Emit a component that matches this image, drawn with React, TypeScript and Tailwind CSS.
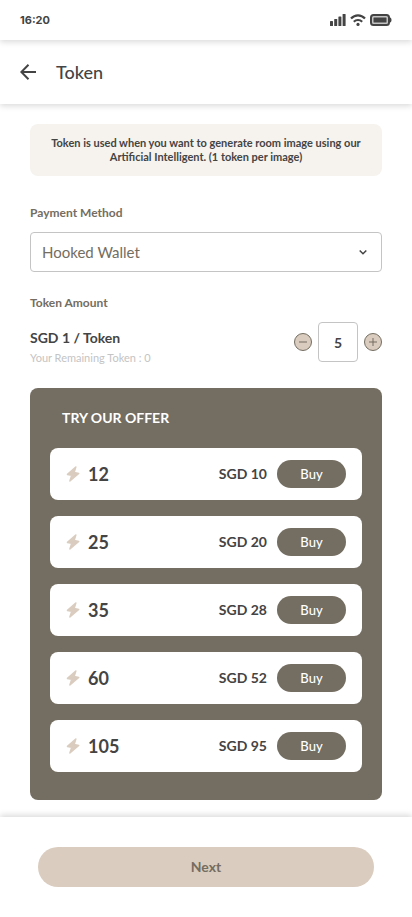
import { useState } from 'react';

interface Offer {
  tokens: number;
  price: number;
}

const offers: Offer[] = [
  { tokens: 12, price: 10 },
  { tokens: 25, price: 20 },
  { tokens: 35, price: 28 },
  { tokens: 60, price: 52 },
  { tokens: 105, price: 95 },
];

const StatusBar = () => (
  <div className="relative z-20 flex h-10 items-center justify-between bg-white px-5 shadow-[0_2px_6px_rgba(0,0,0,0.15)]">
    <span className="font-[Inter,sans-serif] text-[11px] font-bold">16:20</span>
    <div className="flex items-center gap-1">
      <svg width="17" height="12" viewBox="0 0 17 12" fill="currentColor" aria-hidden="true">
        <rect x="1" y="7" width="3" height="5" rx="0.6" />
        <rect x="5.2" y="5" width="3" height="7" rx="0.6" />
        <rect x="9.4" y="2.5" width="3" height="9.5" rx="0.6" />
        <rect x="13.6" y="0" width="3" height="12" rx="0.6" />
      </svg>
      <svg width="16" height="12" viewBox="0 0 16 12" fill="none" stroke="currentColor" strokeWidth="2.2" aria-hidden="true">
        <path d="M1 4.600C5 .3 11 .3 15 4.600" />
        <path d="M3.800 7.800c2.400-2.400 6-2.400 8.400 0" />
        <circle cx="8" cy="10.400" r="1.600" fill="currentColor" stroke="none" />
      </svg>
      <svg width="22" height="12" viewBox="0 0 22 12" aria-hidden="true">
        <rect x="1" y="1" width="18" height="10" rx="2.5" fill="#c4c4c4" stroke="currentColor" strokeWidth="2" />
        <rect x="3.5" y="3.5" width="13" height="5" rx="0.5" fill="currentColor" />
        <path d="M20 3.500c2 .3 2 4.700 0 5z" fill="currentColor" />
      </svg>
    </div>
  </div>
);

const Header = () => (
  <header className="relative z-10 flex h-16 items-center gap-5 bg-white px-5 shadow-[0_2px_6px_rgba(0,0,0,0.15)]">
    <button type="button" aria-label="Back">
      <svg width="16" height="16" viewBox="0 0 16 16" fill="none" stroke="currentColor" strokeWidth="2" aria-hidden="true">
        <path d="M16 8H1.500M8.500 .8 1.300 8l7.200 7.200" />
      </svg>
    </button>
    <h1 className="text-lg font-medium">Token</h1>
  </header>
);

interface StepButtonProps {
  label: string;
  icon: string;
  onClick: () => void;
}

const StepButton = ({ label, icon, onClick }: StepButtonProps) => (
  <button
    type="button"
    aria-label={label}
    onClick={onClick}
    className="flex size-[18px] items-center justify-center rounded-full border border-[#746d61] bg-[#daccbf] text-[#746d61]"
  >
    <svg width="8" height="8" viewBox="0 0 8 8" fill="none" stroke="currentColor" aria-hidden="true">
      <path d={icon} />
    </svg>
  </button>
);

const OfferRow = ({ tokens, price }: Offer) => (
  <li className="flex h-[52px] items-center rounded-lg bg-white px-4">
    <svg
      width="14"
      height="16"
      viewBox="0 0 14 16"
      fill="#daccbf"
      stroke="#daccbf"
      strokeWidth="1.5"
      strokeLinejoin="round"
      aria-hidden="true"
    >
      <path d="M9.800 1 1.500 8.400l4.300.9L3.900 15l8.800-7.600-4.500-1z" />
    </svg>
    <span className="ml-2 text-lg font-bold">{tokens}</span>
    <span className="ml-auto text-sm font-bold">SGD {price}</span>
    <button type="button" className="ml-[10px] h-7 w-[69px] rounded-full bg-[#746d61] pt-0.5 text-[13px] font-medium text-white">
      Buy
    </button>
  </li>
);

const App = () => {
  const [amount, setAmount] = useState(5);

  return (
    <div className="flex min-h-screen flex-col bg-white font-[Lato,sans-serif] text-[#444444]">
      <StatusBar />
      <Header />

      <main className="flex-1 px-[30px] pt-5 pb-[17px]">
        <p className="rounded-lg bg-[#f6f3ee] px-5 py-3 text-center text-[11px] leading-[14px] font-bold">
          Token is used when you want to generate room image using our Artificial Intelligent. (1 token per image)
        </p>

        <label htmlFor="payment" className="mt-[29px] block text-xs leading-4 font-bold text-[#746d61]">
          Payment Method
        </label>
        <div className="relative mt-[11px]">
          <select
            id="payment"
            className="h-10 w-full appearance-none rounded border border-[#c4c4c4] bg-white px-[11px] text-[15px] text-[#746d61]"
          >
            <option>Hooked Wallet</option>
          </select>
          <svg
            className="pointer-events-none absolute top-4 right-[15px]"
            width="8"
            height="8"
            viewBox="0 0 8 8"
            fill="none"
            stroke="currentColor"
            strokeWidth="1.5"
            aria-hidden="true"
          >
            <path d="m.7 2.500 3.300 3.300 3.300-3.300" />
          </svg>
        </div>

        <label htmlFor="amount" className="mt-[23px] block text-xs leading-4 font-bold text-[#746d61]">
          Token Amount
        </label>
        <div className="mt-[11px] flex items-start justify-between">
          <div className="pt-[6px]">
            <p className="text-sm leading-5 font-bold">SGD 1 / Token</p>
            <p className="text-[11px] leading-5 text-[#c4c4c4]">Your Remaining Token : 0</p>
          </div>
          <div className="flex items-center gap-[6px]">
            <StepButton label="Decrease" icon="M0 4h8" onClick={() => setAmount(Math.max(0, amount - 1))} />
            <input
              id="amount"
              type="text"
              inputMode="numeric"
              value={amount}
              onChange={(e) => setAmount(Number(e.target.value) || 0)}
              className="size-10 rounded border border-[#c4c4c4] text-center text-sm font-bold"
            />
            <StepButton label="Increase" icon="M0 4h8M4 0v8" onClick={() => setAmount(amount + 1)} />
          </div>
        </div>

        <section className="mt-5 rounded-lg bg-[#746d61] px-5 pt-5 pb-7">
          <h2 className="ml-3 text-sm leading-5 font-bold text-white">TRY OUR OFFER</h2>
          <ul className="mt-5 flex flex-col gap-4">
            {offers.map((offer) => (
              <OfferRow key={offer.tokens} {...offer} />
            ))}
          </ul>
        </section>
      </main>

      <footer className="bg-white px-[38px] py-[30px] shadow-[0_-2px_6px_rgba(0,0,0,0.15)]">
        <button type="button" className="h-10 w-full rounded-full bg-[#daccbf] text-sm font-bold text-[#746d61]">
          Next
        </button>
      </footer>
    </div>
  );
};

export default App;
